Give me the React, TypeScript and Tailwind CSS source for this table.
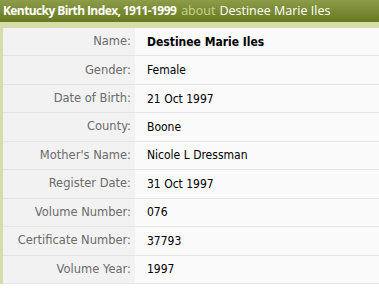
import React from "react";

const rows: [string, string][] = [
  ["Name:", "Destinee Marie Iles"],
  ["Gender:", "Female"],
  ["Date of Birth:", "21 Oct 1997"],
  ["County:", "Boone"],
  ["Mother's Name:", "Nicole L Dressman"],
  ["Register Date:", "31 Oct 1997"],
  ["Volume Number:", "076"],
  ["Certificate Number:", "37793"],
  ["Volume Year:", "1997"],
];

const App: React.FC = () => {
  return (
    <div className="w-[379px] h-[289px] bg-white font-['DejaVu_Sans',Verdana,sans-serif] overflow-hidden">
      {/* Title bar */}
      <div className="h-[22px] bg-gradient-to-b from-[#8c9c48] to-[#67791f] px-[3px] flex items-center whitespace-nowrap leading-none text-white font-['Open_Sans',sans-serif]">
        <span className="font-bold text-[12px] tracking-[-0.6px]">Kentucky Birth Index, 1911-1999</span>
        <span className="text-[#c9d58e] ml-[5px] text-[12.5px]">about</span>
        <span className="ml-[4px] text-[12.5px]">Destinee Marie Iles</span>
      </div>
      <div className="h-[6px] bg-[#d5ddab]" />

      {/* Record table */}
      <div className="border-l-[3px] border-[#d5ddab]">
        {rows.map(([label, value], i) => (
          <div key={label} className="flex h-[28.45px] border-b border-[#e4e4e4]">
            <div className="w-[132px] bg-[#f2f2f2] flex items-center justify-end pr-[4px] text-[11.5px] text-[#6b6b6b]">
              {label}
            </div>
            <div
              className={
                "flex-1 bg-[#fafafa] flex items-center pl-[12px] text-[12px] text-black font-['DejaVu_Sans_Condensed','DejaVu_Sans',sans-serif]" +
                (i === 0 ? " font-bold" : "")
              }
            >
              {value}
            </div>
          </div>
        ))}
      </div>
    </div>
  );
};

export default App;
